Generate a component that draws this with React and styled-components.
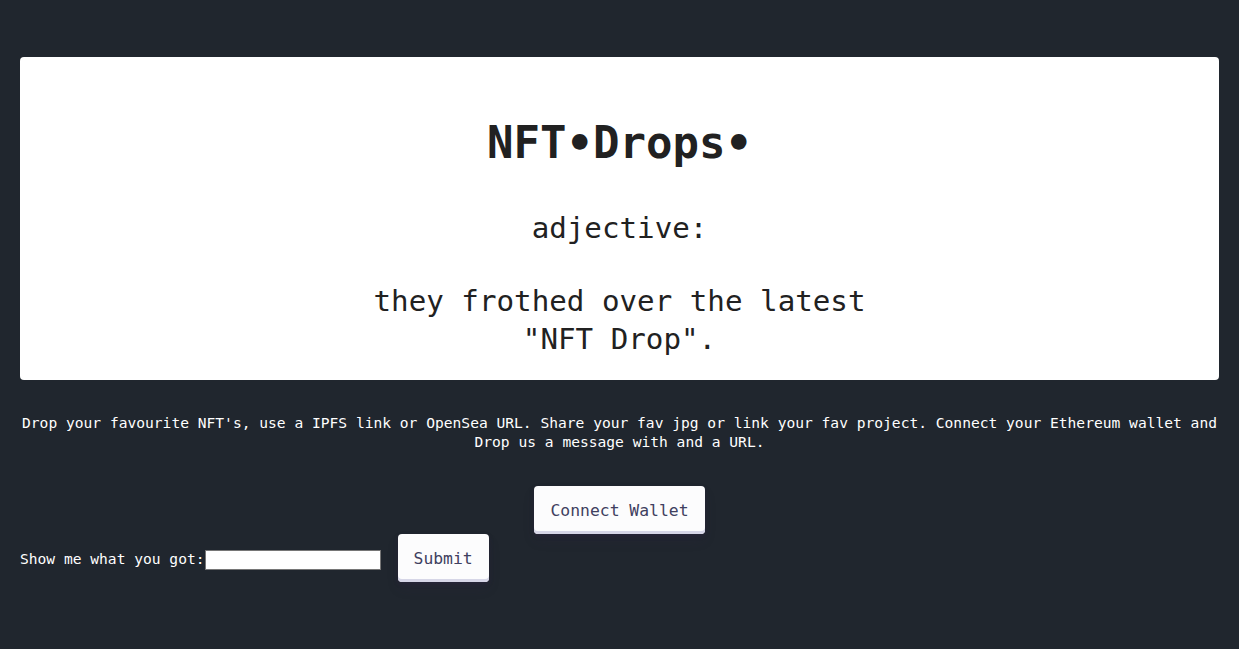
import React from "react";
import styled, { createGlobalStyle } from "styled-components";

const Global = createGlobalStyle`
  html, body { margin: 0; padding: 0; background: #20262e; }
  body { font-family: "DejaVu Sans Mono", "Liberation Mono", monospace; }
  * { box-sizing: border-box; }
`;

const Page = styled.div`
  min-height: 649px;
  padding: 57px 20px 0 20px;
  display: flex;
  flex-direction: column;
  align-items: stretch;
`;

const Card = styled.section`
  background: #ffffff;
  border-radius: 4px;
  height: 323px;
  padding: 60px 0 22px;
  display: flex;
  flex-direction: column;
  align-items: center;
  color: #212121;
  text-align: center;
`;

const Title = styled.h1`
  margin: 0;
  font-size: 44px;
  line-height: 52px;
  font-weight: bold;
`;

const Big = styled.p`
  margin: ${(p) => p.$top}px 0 0;
  font-size: 29.2px;
  line-height: 38px;
  font-weight: normal;
`;

const Description = styled.p`
  margin: 33px 0 0;
  color: #ffffff;
  font-size: 14.6px;
  line-height: 19px;
  text-align: center;
`;

const Center = styled.div`
  display: flex;
  justify-content: center;
  margin-top: 35px;
`;

const Button = styled.button`
  appearance: none;
  border: 0;
  background: #fcfcfd;
  border-radius: 4px;
  box-shadow: rgba(45, 35, 66, 0.4) 0 2px 4px,
    rgba(45, 35, 66, 0.3) 0 7px 13px -3px, #d6d6e7 0 -3px 0 inset;
  color: #3f4060;
  font-family: "DejaVu Sans Mono", "Liberation Mono", monospace;
  font-size: 16.4px;
  height: 48px;
  padding: 0 16px;
  margin-left: ${(p) => p.$ml || 0}px;
  cursor: pointer;
`;

const Form = styled.form`
  display: flex;
  align-items: center;
`;

const Label = styled.label`
  color: #ffffff;
  font-size: 14.6px;
  line-height: 19px;
  margin-top: 1px;
`;

const Input = styled.input`
  width: 176px;
  height: 20px;
  border: 1px solid #767676;
  background: #ffffff;
  padding: 0 2px;
  margin: 3px 0 0;
`;

export default function App() {
  return (
    <>
      <Global />
      <Page>
        <Card>
          <Title>NFT•Drops•</Title>
          <Big $top={40}>adjective:</Big>
          <Big $top={35}>
            they frothed over the latest
            <br />
            "NFT Drop".
          </Big>
        </Card>
        <Description>
          Drop your favourite NFT's, use a IPFS link or OpenSea URL. Share your
          fav jpg or link your fav project. Connect your Ethereum wallet and
          Drop us a message with and a URL.
        </Description>
        <Center>
          <Button type="button">Connect Wallet</Button>
        </Center>
        <Form onSubmit={(e) => e.preventDefault()}>
          <Label htmlFor="msg">Show me what you got:</Label>
          <Input id="msg" type="text" />
          <Button type="submit" $ml={17}>
            Submit
          </Button>
        </Form>
      </Page>
    </>
  );
}
